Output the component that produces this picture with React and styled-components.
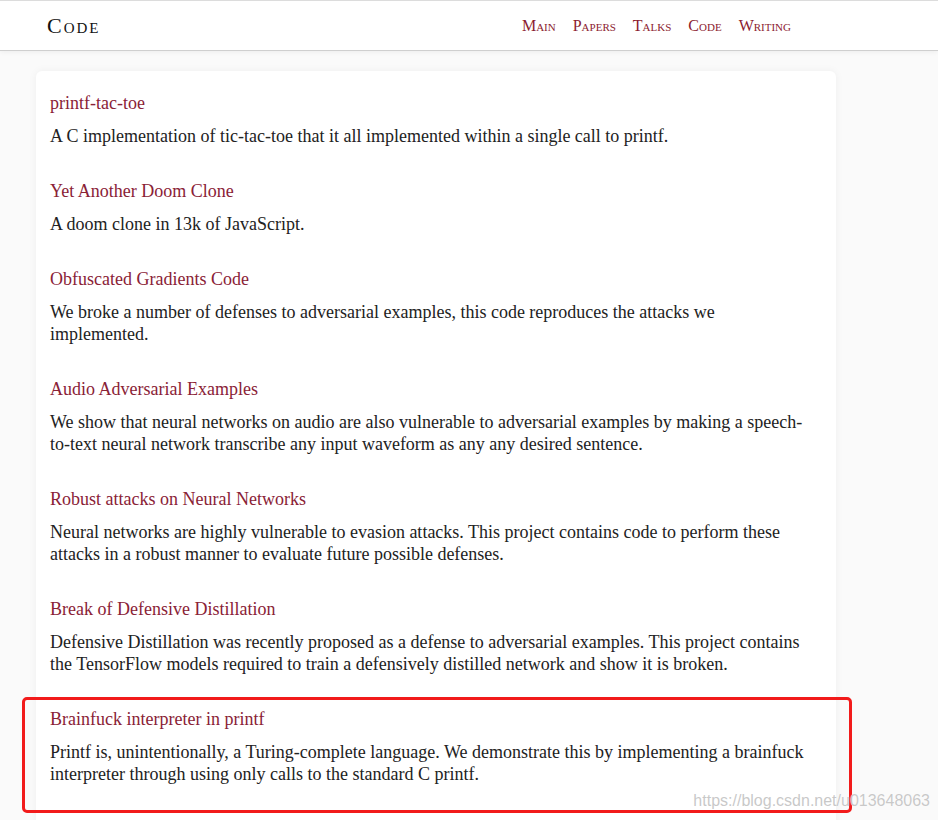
import React from "react";
import styled, { createGlobalStyle } from "styled-components";

const GlobalStyle = createGlobalStyle`
  html, body { margin: 0; padding: 0; }
  body {
    background: #fafafa;
    font-family: "Liberation Serif", "DejaVu Serif", serif;
    color: #222;
  }
`;

const Page = styled.div`
  position: relative;
  min-height: 820px;
  overflow: hidden;
`;

const Header = styled.header`
  height: 49px;
  border-top: 1px solid #dcdcdc;
  border-bottom: 1px solid #cfcfcf;
  background: #fff;
  box-shadow: 0 1px 5px rgba(0, 0, 0, 0.06);
  display: flex;
  align-items: center;
  justify-content: space-between;
  padding: 0 147px 0 47px;
`;

const Brand = styled.div`
  font-variant: small-caps;
  font-size: 22px;
  letter-spacing: 2px;
  color: #111;
`;

const Nav = styled.nav`
  display: flex;
  gap: 17px;
`;

const NavLink = styled.a`
  font-variant: small-caps;
  font-size: 16px;
  color: #8c1c30;
  text-decoration: none;
`;

const Main = styled.main`
  padding: 20px 102px 0 36px;
`;

const Card = styled.section`
  background: #fff;
  border-radius: 6px;
  box-shadow: 0 0 8px rgba(0, 0, 0, 0.05);
  padding: 21px 24px 40px 14px;
`;

const Item = styled.div`
  position: relative;
  margin-bottom: 33px;
`;

const Title = styled.a`
  display: block;
  font-size: 18px;
  line-height: 22px;
  color: #8a2236;
  text-decoration: none;
  margin-bottom: 11px;
`;

const Desc = styled.p`
  margin: 0;
  font-size: 18px;
  line-height: 22px;
  color: #222;
`;

const Highlight = styled.div`
  position: absolute;
  top: -11px;
  left: -28px;
  right: -40px;
  bottom: -28px;
  border: 3px solid #f21b1b;
  border-radius: 5px;
  pointer-events: none;
`;

const Watermark = styled.div`
  position: absolute;
  right: 8px;
  top: 792px;
  font-family: "Liberation Sans", Arial, sans-serif;
  font-size: 16px;
  color: rgba(190, 190, 190, 0.85);
  text-shadow: 0 0 1px #fff;
  pointer-events: none;
`;

const items = [
  {
    title: "printf-tac-toe",
    desc: "A C implementation of tic-tac-toe that it all implemented within a single call to printf.",
  },
  { title: "Yet Another Doom Clone", desc: "A doom clone in 13k of JavaScript." },
  {
    title: "Obfuscated Gradients Code",
    desc: "We broke a number of defenses to adversarial examples, this code reproduces the attacks we implemented.",
  },
  {
    title: "Audio Adversarial Examples",
    desc: "We show that neural networks on audio are also vulnerable to adversarial examples by making a speech-to-text neural network transcribe any input waveform as any any desired sentence.",
  },
  {
    title: "Robust attacks on Neural Networks",
    desc: "Neural networks are highly vulnerable to evasion attacks. This project contains code to perform these attacks in a robust manner to evaluate future possible defenses.",
  },
  {
    title: "Break of Defensive Distillation",
    desc: "Defensive Distillation was recently proposed as a defense to adversarial examples. This project contains the TensorFlow models required to train a defensively distilled network and show it is broken.",
  },
  {
    title: "Brainfuck interpreter in printf",
    desc: "Printf is, unintentionally, a Turing-complete language. We demonstrate this by implementing a brainfuck interpreter through using only calls to the standard C printf.",
    highlight: true,
  },
];

export default function App() {
  return (
    <Page>
      <GlobalStyle />
      <Header>
        <Brand>Code</Brand>
        <Nav>
          {["Main", "Papers", "Talks", "Code", "Writing"].map((n) => (
            <NavLink key={n} href="#">
              {n}
            </NavLink>
          ))}
        </Nav>
      </Header>
      <Main>
        <Card>
          {items.map((it) => (
            <Item key={it.title}>
              <Title href="#">{it.title}</Title>
              <Desc>{it.desc}</Desc>
              {it.highlight && <Highlight />}
            </Item>
          ))}
        </Card>
      </Main>
      <Watermark>https://blog.csdn.net/u013648063</Watermark>
    </Page>
  );
}
